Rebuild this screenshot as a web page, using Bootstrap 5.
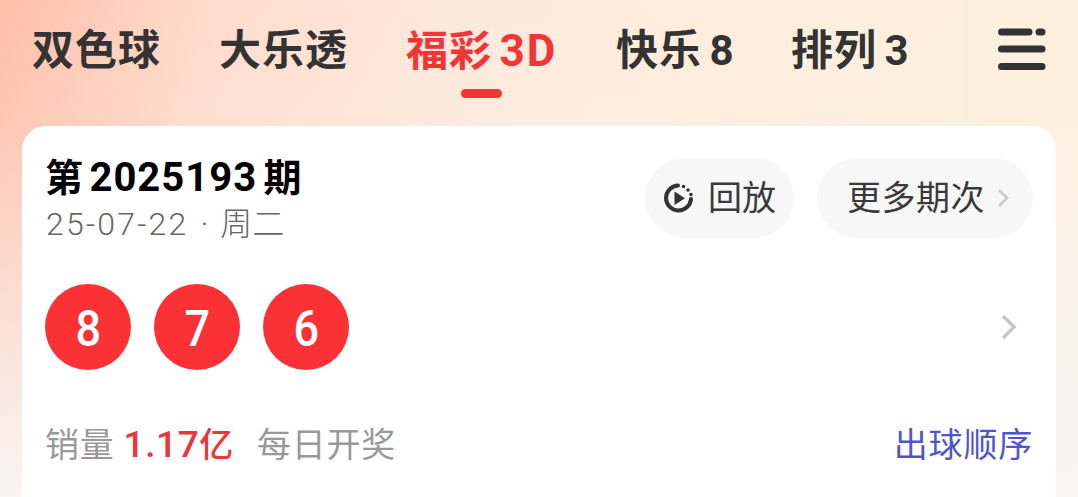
<!DOCTYPE html>
<html lang="zh-CN">
<head>
<meta charset="utf-8">
<title>福彩3D</title>
<link href="https://cdn.jsdelivr.net/npm/bootstrap@5.3.0/dist/css/bootstrap.min.css" rel="stylesheet">
<style>
html,body{height:100%;}
body{
  width:1078px;height:497px;overflow:hidden;margin:0;
  font-family:Roboto,"Noto Sans CJK SC",sans-serif;
  background:
    linear-gradient(180deg,rgba(248,245,242,0) 0,rgba(248,245,242,.15) 25%,#f9f5f3 100%),
    linear-gradient(90deg,#ffbfa8 0,#ffdccd 20%,#feeadb 45%,#fdf0de 100%);
}
.tab-strip{height:126px;padding-left:32px;}
.tab-item{font-size:42px;font-weight:700;color:#333;line-height:42px;margin-top:30px;white-space:nowrap;position:relative;word-spacing:-4px;letter-spacing:1px;}
.tab-item.is-on{color:#f53438;}
.tab-item.is-on::after{content:"";position:absolute;left:55px;bottom:-25px;width:41px;height:9px;border-radius:5px;background:#f53438;}
.tab-on-latin{font-size:44px;letter-spacing:2px;}
.tab-a{width:187px}.tab-b{width:187px}.tab-c{width:210px}.tab-d{width:175px}.tab-e{width:173px}
.menu-box{width:114px;height:126px;background:linear-gradient(90deg,rgba(245,233,216,.15) 0,#fdf0de 30%);padding:28px 0 0 34px;}
.sheet{margin:0 22px;height:420px;background:#fff;border-radius:24px;padding:30px 23px 0 24px;}
.issue{font-size:38px;font-weight:700;color:#000;line-height:44px;word-spacing:-3px;margin-left:-1px;}
.issue-num{font-size:40px;letter-spacing:1px;}
.issue-date{font-size:32px;font-weight:300;line-height:38px;color:#666;margin-top:5px;}
.date-num{letter-spacing:2.2px;}
.date-dot{margin:0 12px;}
.pill{height:80px;border-radius:40px;background:#f7f7f7;font-size:34px;color:#3a3a3a;line-height:1;margin-top:2px;}
.pill-a{width:149px;padding-left:18px;gap:13px;}
.pill-b{width:216px;padding-left:30px;margin-left:23px;gap:11px;letter-spacing:.5px;}
.balls{margin-top:41px;height:86px;gap:23px;margin-left:-1px;}
.ball{width:86px;height:86px;border-radius:50%;background:#fb3235;color:#fff;font-size:50px;font-weight:500;line-height:1;padding-top:3px;}
.ball-digit{display:inline-block;transform:scaleX(.9);}
.arrow-next{margin-right:11px;}
.foot{margin-top:52px;font-size:34px;line-height:46px;color:#999;margin-left:-1px;letter-spacing:.7px;}
.sales{color:#e9383c;font-weight:500;}
.sales-num{font-size:37px;letter-spacing:.6px;}
.gap-left{margin-left:23px;}
.order{color:#4f55cf;letter-spacing:.8px;}
</style>
</head>
<body>
<div class="d-flex align-items-start tab-strip">
  <div class="tab-item tab-a">双色球</div>
  <div class="tab-item tab-b">大乐透</div>
  <div class="tab-item tab-c is-on">福彩 <span class="tab-on-latin">3D</span></div>
  <div class="tab-item tab-d">快乐 8</div>
  <div class="tab-item tab-e">排列 3</div>
  <div class="menu-box">
    <svg width="48" height="44" viewBox="0 0 48 44" aria-hidden="true">
      <g stroke="#333" stroke-width="7" stroke-linecap="round" fill="none">
        <path d="M3.500 4H31"/><path d="M41 4H44"/><path d="M3.500 21H44"/><path d="M3.500 38.500H44"/>
      </g>
    </svg>
  </div>
</div>
<div class="sheet">
  <div class="d-flex justify-content-between align-items-start">
    <div>
      <div class="issue">第 <span class="issue-num">2025193</span> 期</div>
      <div class="issue-date"><span class="date-num">25-07-22</span><span class="date-dot">·</span>周二</div>
    </div>
    <div class="d-flex">
      <div class="pill pill-a d-flex align-items-center">
        <svg width="32" height="32" viewBox="0 0 32 32" aria-hidden="true">
          <path d="M15 3.500A12.500 12.500 0 1 0 28 17" fill="none" stroke="#333" stroke-width="4" stroke-linecap="round"/>
          <path d="M11.500 9.500L22 16.200L11.500 23Z" fill="#333"/>
          <circle cx="20.500" cy="4.500" r="1.800" fill="#333"/><circle cx="25" cy="8" r="1.800" fill="#333"/><circle cx="28" cy="12.500" r="1.800" fill="#333"/>
        </svg>
        <span>回放</span>
      </div>
      <div class="pill pill-b d-flex align-items-center">
        <span>更多期次</span>
        <svg width="14" height="24" viewBox="0 0 14 24" aria-hidden="true"><path d="M3 4L11 12L3 20" fill="none" stroke="#ccc" stroke-width="2.800"/></svg>
      </div>
    </div>
  </div>
  <div class="d-flex align-items-center balls">
    <div class="ball d-flex align-items-center justify-content-center"><span class="ball-digit">8</span></div>
    <div class="ball d-flex align-items-center justify-content-center"><span class="ball-digit">7</span></div>
    <div class="ball d-flex align-items-center justify-content-center"><span class="ball-digit">6</span></div>
    <svg class="ms-auto arrow-next" width="24" height="32" viewBox="0 0 24 32" aria-hidden="true"><path d="M5 5L16 16L5 27" fill="none" stroke="#c8c8c8" stroke-width="3.500"/></svg>
  </div>
  <div class="d-flex justify-content-between foot">
    <div>销量 <span class="sales"><span class="sales-num">1.17</span>亿</span><span class="gap-left">每日开奖</span></div>
    <div class="order">出球顺序</div>
  </div>
</div>
<script src="https://cdn.jsdelivr.net/npm/bootstrap@5.3.0/dist/js/bootstrap.bundle.min.js"></script>
</body>
</html>
